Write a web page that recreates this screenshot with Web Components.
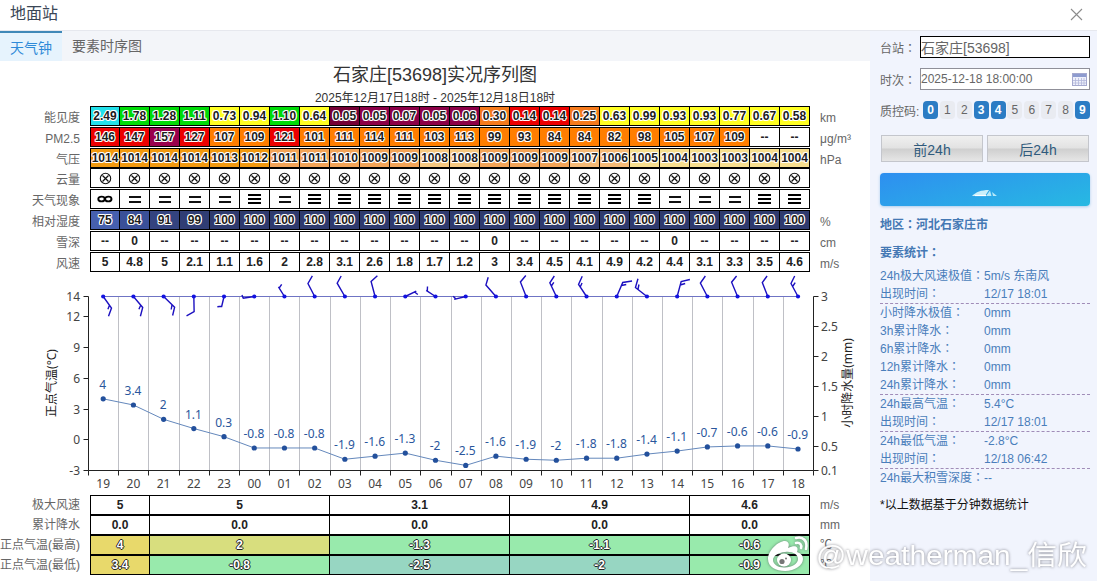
<!DOCTYPE html>
<html lang="zh-CN">
<head>
<meta charset="utf-8">
<title>地面站</title>
<style>
    html, body { margin: 0; height: 100%; overflow: hidden; background: #fff; }
    body { font-family: "Liberation Sans", "Noto Sans CJK SC", sans-serif; font-size: 12px; color: #666; }
</style>
</head>
<body>
<station-window caption="地面站">
    <tab-bar slot="main">
        <tab-item active>天气钟</tab-item>
        <tab-item>要素时序图</tab-item>
    </tab-bar>
    <weather-clock slot="main"></weather-clock>
    <side-panel slot="side"></side-panel>
</station-window>
<weibo-mark>@weatherman_信欣</weibo-mark>

<script>
// attaches an open shadow root with the given markup
function montar(el, html){
    const t = document.createElement('template');
    t.innerHTML = html;
    el.attachShadow({mode: 'open'}).appendChild(t.content.cloneNode(true));
    return el.shadowRoot;
}


class StationWindow extends HTMLElement{
    constructor(){
        super();
        montar(this, `
            <style>
                :host { display: flex; flex-direction: column; width: 1097px; height: 583px; }
                header { display: flex; justify-content: space-between; box-sizing: border-box; height: 31px;
                         padding: 0 14px 0 10px; border-bottom: 1px solid #e6e8ee; }
                h1 { margin: 0; font-size: 16px; line-height: 27px; font-weight: normal; color: #3a4656; }
                header svg { margin-top: 8px; }
                .body { display: flex; height: 550px; }
                main { width: 870px; }
                aside { flex: 1; background: #f1f4fd; }
            </style>
            <header>
                <h1></h1>
                <svg width="13" height="13"><path d="M1 1L12 12M12 1L1 12" stroke="#8c8c8c" stroke-width="1.1"/></svg>
            </header>
            <div class="body">
                <main><slot name="main"></slot></main>
                <aside><slot name="side"></slot></aside>
            </div>`);
    }

    connectedCallback(){
        this.shadowRoot.querySelector('h1').textContent = this.getAttribute('caption');
    }
}


class TabBar extends HTMLElement{
    constructor(){
        super();
        montar(this, `
            <style>:host { display: flex; height: 30px; background: #f3f5f9; }</style>
            <slot></slot>`);
    }
}


class TabItem extends HTMLElement{
    constructor(){
        super();
        montar(this, `
            <style>
                :host { display: block; box-sizing: border-box; height: 30px; padding: 0 10px;
                        font-size: 14px; line-height: 30px; color: #666; }
                :host([active]) { background: #e6f3fd; color: #2f8ad8; border-top: 2px solid #3f88b8; line-height: 31px; }
            </style>
            <slot></slot>`);
    }
}


// one row of the table: label, bordered cells, unit
class DataStrip extends HTMLElement{
    constructor(){
        super();
        montar(this, `
            <style>
                :host { display: flex; height: 20px; line-height: 20px; white-space: nowrap; }
                .label { width: 80px; margin-right: 10px; text-align: right; }
                .label, .unit { position: relative; top: var(--label-shift, 0px); }
                .cells { display: flex; width: 720px; box-sizing: border-box; margin-right: 10px;
                         border: 1px solid #000; border-right: 0; }
                .cell { box-sizing: border-box; height: 18px; line-height: 18px; border-right: 1px solid #000;
                        display: flex; justify-content: center; align-items: center;
                        font-weight: bold; color: #222; }
                .halo { color: #1c1c1c; text-shadow: -1px 0 #fff, 1px 0 #fff, 0 -1px #fff, 0 1px #fff,
                        -1px -1px 0 #fffb, 1px -1px 0 #fffb, -1px 1px 0 #fffb, 1px 1px 0 #fffb; }
                .dark { color: #fff; text-shadow: -1px 0 #222, 1px 0 #222, 0 -1px #222, 0 1px #222; }
            </style>
            <div class="label"></div><div class="cells"></div><div class="unit"></div>`);
    }

    // row: {label, unit, values, colors, spans, tone, icons}
    set row(row){
        const $ = (s) => this.shadowRoot.querySelector(s);
        $('.label').textContent = row.label;
        $('.unit').textContent = row.unit || '';
        row.values.forEach((v, i) => {
            const c = document.createElement('div');
            c.className = 'cell';
            c.style.width = ((row.spans ? row.spans[i] : 1) * 30 - (i == 0 ? 1 : 0)) + 'px';
            if (row.colors && row.colors[i]){
                c.style.background = row.colors[i];
                c.classList.add(row.tone || 'halo');
            }
            if (row.icons){
                c.innerHTML = row.icons[v];
            }else{
                c.textContent = v;
            }
            $('.cells').appendChild(c);
        });
    }
}


const ICONS = {
    x: `<svg width="13" height="13" fill="none" stroke="#111"><circle cx="6.5" cy="6.5" r="5.2" stroke-width="1.1"/><path d="M3.5 3.5L9.500 9.500M9.500 3.500L3.500 9.500" stroke-width="1.3"/></svg>`,
    o: `<svg width="16" height="8" fill="none" stroke="#000" stroke-width="1.9"><ellipse cx="4.500" cy="4" rx="3.200" ry="2.400"/><ellipse cx="11.300" cy="4" rx="3.200" ry="2.400"/></svg>`,
    2: `<svg width="12" height="10"><path d="M0 3H12M0 8H12" stroke="#111" stroke-width="2"/></svg>`,
    3: `<svg width="13" height="12"><path d="M0 2H13M0 6H13M0 10H13" stroke="#000" stroke-width="2"/></svg>`
};

const rep = (v, n) => Array(n).fill(v);
const [G, Y, R, O, P] = ['#00db08', '#ffff22', '#ec0000', '#ff7e00', '#8b0047'];
const [A, B, C, D] = ['#f2990f', '#f3a457', '#f6c880', '#f7de8e'];

const HOURLY = [
    {label: '能见度', unit: 'km',
     values: '2.49 1.78 1.28 1.11 0.73 0.94 1.10 0.64 0.05 0.05 0.07 0.05 0.06 0.30 0.14 0.14 0.25 0.63 0.99 0.93 0.93 0.77 0.67 0.58'.split(' '),
     colors: ['#22e0ea', G, G, G, Y, Y, G, Y, '#740035', P, P, P, P, '#f57a1c', R, R, '#f57a1c', ...rep(Y, 7)]},
    {label: 'PM2.5', unit: 'μg/m³',
     values: '146 147 157 127 107 109 121 101 111 114 111 103 113 99 93 84 84 82 98 105 107 109 -- --'.split(' '),
     colors: [R, R, '#99004c', R, O, O, R, ...rep(O, 15)]},
    {label: '气压', unit: 'hPa',
     values: '1014 1014 1014 1014 1013 1012 1011 1011 1010 1009 1009 1008 1008 1009 1009 1009 1007 1006 1005 1004 1003 1003 1004 1004'.split(' '),
     colors: [...rep(A, 6), ...rep(B, 5), C, C, B, B, B, '#f6ba76', '#f6ba76', ...rep(D, 6)]},
    {label: '云量', values: rep('x', 24), icons: ICONS},
    {label: '天气现象', values: [...'o22223233333333333322233'], icons: ICONS},
    {label: '相对湿度', unit: '%', values: ['75', '84', '91', '99', ...rep('100', 20)],
     colors: ['#4660ae', '#3a5098', '#34437f', '#303d74', ...rep('#2f3b6e', 20)]},
    {label: '雪深', unit: 'cm', values: rep('--', 24).map((v, i) => [1, 13, 19].includes(i) ? '0' : v)},
    {label: '风速', unit: 'm/s',
     values: '5 4.8 5 2.1 1.1 1.6 2 2.8 3.1 2.6 1.8 1.7 1.2 3 3.4 4.5 4.1 4.9 4.2 4.4 3.1 3.3 3.5 4.6'.split(' ')}
];

const SPANS = [2, 6, 6, 6, 4];
const SUMMARY = [
    {label: '极大风速', unit: 'm/s', spans: SPANS, values: ['5', '5', '3.1', '4.9', '4.6']},
    {label: '累计降水', unit: 'mm', spans: SPANS, values: rep('0.0', 5)},
    {label: '正点气温(最高)', unit: '℃', spans: SPANS, tone: 'dark', values: ['4', '2', '-1.3', '-1.1', '-0.6'],
     colors: ['#e8d96b', '#d8de7e', '#98eaac', '#98eaac', '#98eaac']},
    {label: '正点气温(最低)', unit: '℃', spans: SPANS, tone: 'dark', values: ['3.4', '-0.8', '-2.5', '-2', '-0.9'],
     colors: ['#e8d96b', '#98eaac', '#97d6c2', '#97d6c2', '#98eaac']}
];


class WeatherClock extends HTMLElement{
    constructor(){
        super();
        const root = montar(this, `
            <style>
                :host { display: flex; flex-direction: column; height: 520px; }
                h2 { margin: 0; height: 27px; line-height: 29px; font-size: 18px; font-weight: normal; color: #333; text-align: center; }
                p { margin: 0; height: 18px; line-height: 20px; text-align: center; color: #333; }
                .hourly { display: flex; flex-direction: column; gap: 1px; height: 166px; --label-shift: 2px; }
                .hourly data-strip:nth-child(3) { margin-bottom: -1px; }
                temp-chart { height: 223px; }
            </style>
            <h2>石家庄[53698]实况序列图</h2>
            <p>2025年12月17日18时 - 2025年12月18日18时</p>
            <div class="hourly"></div>
            <temp-chart></temp-chart>
            <div class="summary"></div>`);
        for (const [sel, rows] of [['.hourly', HOURLY], ['.summary', SUMMARY]]){
            for (const row of rows){
                const strip = document.createElement('data-strip');
                strip.row = row;
                root.querySelector(sel).appendChild(strip);
            }
        }
    }
}


class TempChart extends HTMLElement{

    static TEMPS = [4, 3.4, 2, 1.1, 0.3, -0.8, -0.8, -0.8, -1.9, -1.6, -1.3, -2, -2.5, -1.6, -1.9, -2, -1.8, -1.8, -1.4, -1.1, -0.7, -0.6, -0.6, -0.9];

    // wind barbs, one per hour, relative to the station dot
    static BARBS = [
        'M0 0L8.3 11.5L5.3 19.8M6.3 8.8L4.7 12.7',
        'M0 0L9.3 11L7 19.7M7.3 8.8L5.5 12.7',
        'M0 0L11 10.7L9 19M8.4 8.2L7.6 13',
        'M0 0L.3 15L-7.3 19.3',
        'M0 0L-2.5 10.5M-2.3 9.8L-6.7 10.3',
        'M0 0L-11.5 1.7M-11 1.7L-12.3 -1.5',
        'M0 0L-6 -9.7M-5.3 -8.3L-2.8 -12.2',
        'M0 0L-6.7 -13L-2.3 -20.7',
        'M0 0L-7.7 -13.3L-3.7 -20.5',
        'M0 0L-4 -15L2.3 -20.7',
        'M0 0L11 -5.3M9.3 -4.5L12.5 -2',
        'M0 0L-9.3 -6.2M-8.2 -5.5L-8 -10',
        'M0 0L-11.5 2.9M-9.8 2.5L-12.5 -.3',
        'M0 0L-10 -11.5L-7.7 -19.3',
        'M0 0L-5.7 -14.5L-.3 -21',
        'M0 0L-6.5 -13.7L-2 -20.5M-5 -10.5L-2.5 -14.2',
        'M0 0L-8 -12L-4.3 -20.3M-6.3 -9.5L-4.5 -13.5',
        'M0 0L6 -14L15.3 -15.5M4.7 -11L9.5 -12',
        'M0 0L-11.5 -9L-9 -17.7M-9 -7L-8 -12',
        'M0 0L4 -15L12.7 -17M3 -11.5L8 -13',
        'M0 0L-7 -13.5L-2 -20.5',
        'M0 0L-6 -14.3L-1 -20.5',
        'M0 0L-5.5 -14L-.7 -20.5',
        'M0 0L-7 -13L-3.3 -20.5M-5.4 -10L-2.8 -13.8'
    ];

    constructor(){
        super();
        const top = 24.5, bottom = 198.5, left = 88.5, right = 813.5;
        const step = (right - left) / 24;
        const x = (i) => left + step * (i + 0.5) - 0.4;
        const y = (t) => top + (14 - t) * (bottom - top) / 17;
        const yRain = (r) => bottom - (r - 0.1) * 60;

        let grid = '', ticks = '', text = '', dots = '', barbs = '';
        for (let i = 0; i <= 24; i++){
            const gx = Math.floor(left + step * i) + 0.5;
            if (i > 0 && i < 24) grid += `M${gx} ${top}V${bottom}`;
            ticks += `M${gx} ${bottom}v5`;
        }
        for (const t of [14, 12, 9, 6, 3, 0, -3]){
            ticks += `M${left} ${Math.round(y(t) - .5) + .5}h-5`;
            text += `<text x="80" y="${y(t) + 4.5}" text-anchor="end">${t}</text>`;
        }
        for (const r of [3, 2.5, 2, 1.5, 1, 0.5, 0.1]){
            ticks += `M${right} ${Math.round(yRain(r) - .5) + .5}h5`;
            text += `<text x="821" y="${yRain(r) + 4.5}">${r}</text>`;
        }
        TempChart.TEMPS.forEach((t, i) => {
            text += `<text x="${x(i)}" y="216" text-anchor="middle">${String((19 + i) % 24).padStart(2, '0')}</text>`;
            text += `<text class="val" x="${x(i) - .4}" y="${y(t) - 10}" text-anchor="middle">${t}</text>`;
            dots += `<circle cx="${x(i)}" cy="${y(t)}" r="2.6"/>`;
            barbs += `<g transform="translate(${x(i)} ${top})"><path d="${TempChart.BARBS[i]}"/><circle r="2.1"/></g>`;
        });
        const line = TempChart.TEMPS.map((t, i) => `${x(i)},${y(t)}`).join(' ');

        montar(this, `
            <style>
                :host { display: block; }
                svg { display: block; overflow: visible; font: 12px "Noto Sans", "Noto Sans CJK SC", sans-serif; fill: #444; }
                path, polyline { fill: none; }
                .val { fill: #2a569c; }
                .name { font-size: 12px; fill: #222; }
                .barbs path { stroke: #1c10c0; stroke-width: 1.4; }
                .barbs circle { fill: #1212e0; }
            </style>
            <svg width="870" height="223">
                <path d="${grid}" stroke="#bfc0c6"/>
                <path d="M${x(0)} ${top}H${x(23)}" stroke="#6f74c4"/>
                <path d="M${left} ${top}V${bottom}H${right}V${top}${ticks}" stroke="#222"/>
                <polyline points="${line}" stroke="#6488bc"/>
                <g fill="#23509c">${dots}</g>
                <g class="barbs">${barbs}</g>
                ${text}
                <text class="name" transform="translate(55.5 111) rotate(-90)" text-anchor="middle">正点气温(°C)</text>
                <text class="name" transform="translate(852 111) rotate(-90)" text-anchor="middle">小时降水量(mm)</text>
            </svg>`);
    }
}


class StatRow extends HTMLElement{
    constructor(){
        super();
        montar(this, `
            <style>
                :host { display: flex; height: 18px; line-height: 18px; color: #4a7ebb; white-space: nowrap; }
                :host([line]) { border-bottom: 1px dashed #a08cb8; }
                span { width: 104px; }
            </style>
            <span><slot name="k"></slot></span><slot></slot>`);
    }
}


class QcChips extends HTMLElement{
    constructor(){
        super();
        const on = [0, 3, 4, 9];
        let html = '';
        for (let i = 0; i < 10; i++) html += `<i class="${on.includes(i) ? 'on' : ''}">${i}</i>`;
        montar(this, `
            <style>
                :host { display: flex; justify-content: space-between; width: 167px; }
                i { width: 15px; height: 18px; line-height: 18px; border-radius: 4px; text-align: center;
                    font-style: normal; background: #e9ebf1; color: #666; }
                .on { background: #2c7cc4; color: #fff; font-weight: bold; }
            </style>${html}`);
    }
}


class SidePanel extends HTMLElement{
    constructor(){
        super();
        // full-width colon centred in its box
        const colon = '<b lang="zh-TW">：</b>';
        const stats = [
            ['24h极大风速极值', '5m/s 东南风'], ['出现时间', '12/17 18:01', 1],
            ['小时降水极值', '0mm'], ['3h累计降水', '0mm'], ['6h累计降水', '0mm'], ['12h累计降水', '0mm'], ['24h累计降水', '0mm', 1],
            ['24h最高气温', '5.4°C'], ['出现时间', '12/17 18:01', 1],
            ['24h最低气温', '-2.8°C'], ['出现时间', '12/18 06:42', 1],
            ['24h最大积雪深度', '--']
        ];
        montar(this, `
            <style>
                :host { display: block; padding: 5px 7px 0 10px; }
                b { font-family: "Noto Sans CJK TC", sans-serif; font-weight: inherit; line-height: 1; }
                .field { display: flex; justify-content: space-between; align-items: center; height: 22px; margin-bottom: 10px; }
                .box { display: flex; align-items: center; justify-content: space-between; box-sizing: border-box;
                       width: 170px; height: 22px; border: 1px solid #8f8f98; background: #fff; padding: 0 2px 0 0; }
                .box.focus { border-color: #000; font-size: 14px; }
                .qc { margin: -1px 0 14px; }
                .pair { display: flex; gap: 4px; padding: 0 1px; }
                .pair button { flex: 1; height: 27px; padding: 0; border: 1px solid #c4c6cc; font: inherit; font-size: 14px; color: #2f5a7c;
                    background: linear-gradient(#f0f0f0, #e2e2e2 48%, #cfcfcf 52%, #e6e6e6); }
                .go { display: flex; justify-content: center; align-items: center; height: 33px; margin-top: 11px; border-radius: 4px;
                      background: linear-gradient(165deg, #2e8ff0, #27b9e2); box-shadow: 0 1px 3px #a9cdec; }
                h3 { margin: 0; font-size: 12px; line-height: 18px; height: 18px; color: #4478b4; }
                .area { margin: 10px 0; }
                .list { margin-top: 5px; }
                p { margin: 9px 0 0; line-height: 18px; color: #111; }
            </style>
            <div class="field"><span>台站${colon}</span><div class="box focus">石家庄[53698]</div></div>
            <div class="field"><span>时次${colon}</span><div class="box">2025-12-18 18:00:00
                <svg width="15" height="13"><rect x=".5" y=".5" width="14" height="12" fill="#eef0fb" stroke="#a5a9cf"/>
                <path d="M1 2.5H14" stroke="#8d9bcf" stroke-width="3"/><path d="M3.5 5V12M6.5 5V12M9.5 5V12M12 5V12M1 7.5H14M1 10H14" stroke="#b3b7da" stroke-width=".8"/></svg>
            </div></div>
            <div class="field qc"><span>质控码:</span><qc-chips></qc-chips></div>
            <div class="pair"><button>前24h</button><button>后24h</button></div>
            <div class="go"><svg width="26" height="8" style="margin-top:6px"><path d="M0 7C4 3 9 1 17 1L13 7Z" fill="#c9f0fb"/><path d="M14 7L18 1.500L19.500 7ZM20 3L25 7H21Z" fill="#b5e8f8"/><path d="M3 6.500H14" stroke="#fff" stroke-width="1.2"/></svg></div>
            <h3 class="area">地区${colon}河北石家庄市</h3>
            <h3>要素统计${colon}</h3>
            <div class="list">${stats.map(([k, v, line]) =>
                `<stat-row ${line ? 'line' : ''}><span slot="k">${k}${colon}</span>${v}</stat-row>`).join('')}</div>
            <p>*以上数据基于分钟数据统计</p>`);
    }
}


// user watermark laid over the lower right corner
class WeiboMark extends HTMLElement{
    constructor(){
        super();
        const name = this.textContent;
        montar(this, `
            <style>
                :host { position: absolute; left: 765px; top: 532px; }
                svg { display: block; filter: drop-shadow(0 0 1.5px rgba(70,70,80,.65)); }
                text { font: 27px "Liberation Sans", "Noto Sans CJK SC", sans-serif; }
            </style>
            <svg width="330" height="46" fill="#fff">
                <path fill-rule="evenodd" d="M20 9C13 9 3 19 3 27C3 35 11 39 20 39C30 39 38 33 38 27C38 23 35 21 32 20C34 15 31 12 23 16C25 12 23 9 20 9ZM20 20C27 19 33 22 33 27C33 32 27 35 20 35.500C13 36 8 32 8 28C8 24 13 20.500 20 20Z"/>
                <ellipse cx="19" cy="28" rx="7" ry="6.500"/>
                <circle cx="17" cy="29.500" r="2.600" fill="#777"/><circle cx="21" cy="26.500" r="1" fill="#777"/>
                <path d="M31 6C38 4 43 9 41 17M31 11C35 10 37 13 36 16" fill="none" stroke="#fff" stroke-width="2.600" stroke-linecap="round"/>
                <text x="51" y="33" textLength="271" lengthAdjust="spacingAndGlyphs">${name}</text>
            </svg>`);
    }
}


customElements.define('data-strip', DataStrip);
customElements.define('temp-chart', TempChart);
customElements.define('stat-row', StatRow);
customElements.define('qc-chips', QcChips);
customElements.define('tab-item', TabItem);
customElements.define('tab-bar', TabBar);
customElements.define('weather-clock', WeatherClock);
customElements.define('side-panel', SidePanel);
customElements.define('station-window', StationWindow);
customElements.define('weibo-mark', WeiboMark);
</script>
</body>
</html>
